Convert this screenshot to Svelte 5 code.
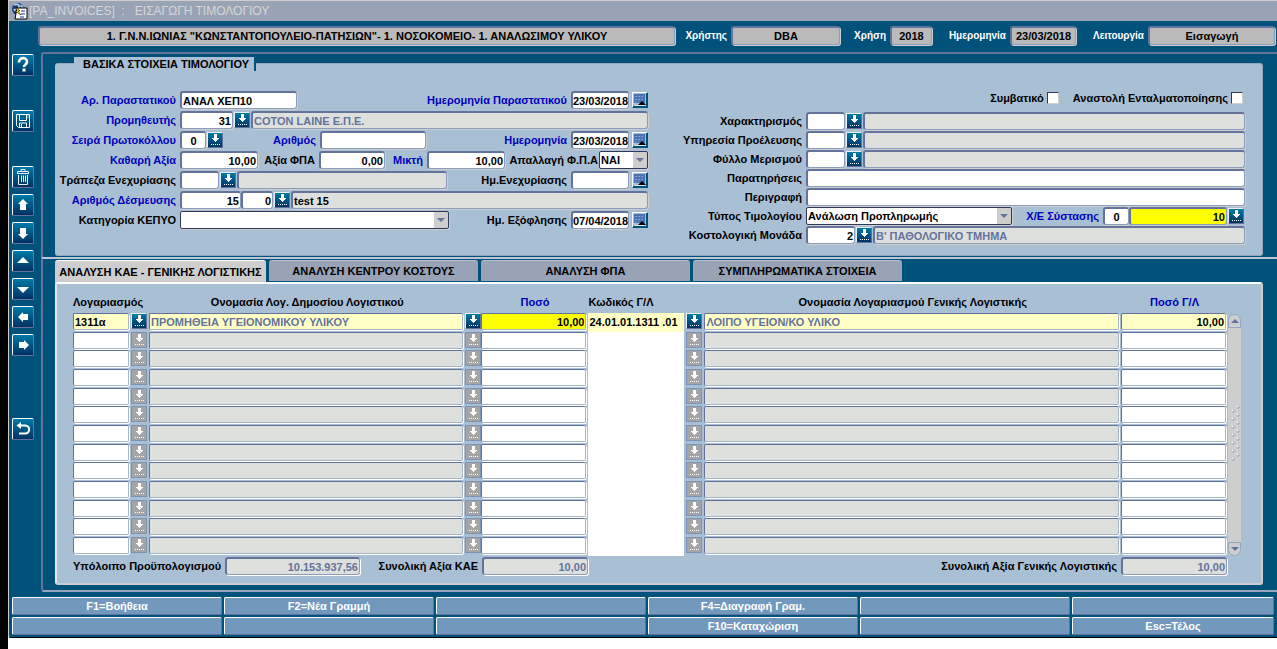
<script lang="ts">
    type Tool = 'help' | 'save' | 'trash' | 'up' | 'down' | 'first' | 'last' | 'left' | 'right' | 'back';

    interface Line {
        account: string;
        name: string;
        amount: string;
        code: string;
        glName: string;
        glAmount: string;
    }

    const tools: { icon: Tool, title: string }[] = [
        { icon: 'help', title: 'Βοήθεια' },
        { icon: 'save', title: 'Καταχώριση' },
        { icon: 'trash', title: 'Διαγραφή' },
        { icon: 'up', title: 'Προηγούμενη γραμμή' },
        { icon: 'down', title: 'Επόμενη γραμμή' },
        { icon: 'first', title: 'Προηγούμενη σελίδα' },
        { icon: 'last', title: 'Επόμενη σελίδα' },
        { icon: 'left', title: 'Προηγούμενο πεδίο' },
        { icon: 'right', title: 'Επόμενο πεδίο' },
        { icon: 'back', title: 'Επιστροφή' },
    ];

    const tabs = [
        'ΑΝΑΛΥΣΗ ΚΑΕ - ΓΕΝΙΚΗΣ ΛΟΓΙΣΤΙΚΗΣ',
        'ΑΝΑΛΥΣΗ ΚΕΝΤΡΟΥ ΚΟΣΤΟΥΣ',
        'ΑΝΑΛΥΣΗ ΦΠΑ',
        'ΣΥΜΠΛΗΡΩΜΑΤΙΚΑ ΣΤΟΙΧΕΙΑ',
    ];

    const keys = [
        'F1=Βοήθεια', 'F2=Νέα Γραμμή', '', 'F4=Διαγραφή Γραμ.', '', '',
        '', '', '', 'F10=Καταχώριση', '', 'Esc=Τέλος',
    ];

    const empty: Line = { account: '', name: '', amount: '', code: '', glName: '', glAmount: '' };

    let lines: Line[] = $state([
        {
            account: '1311α',
            name: 'ΠΡΟΜΗΘΕΙΑ ΥΓΕΙΟΝΟΜΙΚΟΥ ΥΛΙΚΟΥ',
            amount: '10,00',
            code: '24.01.01.1311 .01',
            glName: 'ΛΟΙΠΟ ΥΓΕΙΟΝ/ΚΟ ΥΛΙΚΟ',
            glAmount: '10,00',
        },
        ...Array.from({ length: 12 }, () => ({ ...empty })),
    ]);

    let activeTab = $state(0);
    let activeLine = $state(0);
</script>

{#snippet lov(disabled = false)}
    <button class="lov" class:disabled type="button" aria-label="Λίστα τιμών" {disabled}>
        <svg viewBox="0 0 14 14" shape-rendering="crispEdges">
            <path d="M6 1h3v4h2v1h-1v1H9v1H8v1H7V8H6V7H5V6H4V5h2z" fill="#fff" />
            <path d="M3 11.5h10" stroke="#fff" stroke-dasharray="1 1" />
        </svg>
    </button>
{/snippet}

{#snippet calendar()}
    <button class="calendar" type="button" aria-label="Ημερολόγιο">
        <svg viewBox="0 0 14 14">
            <rect x="1" y="1" width="11" height="9" fill="#4a73b5" />
            <path d="M2 3.500h9M2 6.500h9M2 9h4" stroke="#7b9cd0" stroke-dasharray="2 1" />
            <path d="M5 12l4-4 4 4z" fill="#000" />
            <path d="M2 12.500h11" stroke="#dde7ee" />
        </svg>
    </button>
{/snippet}

{#snippet toolIcon(icon: Tool)}
    <svg viewBox="0 0 20 20" fill="#fff">
        {#if icon === 'help'}
            <path d="M6 7.500C6 1.500 14.500 2 14 7c-.2 2.500-3 2.500-3 5" fill="none" stroke="#fff" stroke-width="2.600" />
            <rect x="9.500" y="13.500" width="3" height="3" />
        {:else if icon === 'save'}
            <path d="M3.500 3.500h13v13h-11l-2-2zM6.500 4v5.500h7V4M6.500 16.500v-4.500h7v4.500M8.500 13v3" fill="none" stroke="#fff" />
            <path d="M14.500 4h1M14.500 6h1" stroke="#fff" />
        {:else if icon === 'trash'}
            <path d="M8 4V2.500h4V4M4.500 6V4.500h11V6M4 6.500h12M5.500 8v9.500h9V8M8.500 8.500V15M10.500 8.500V15M12.500 8.500V15" fill="none" stroke="#e7eff7" />
        {:else if icon === 'up'}
            <path d="M10 4l5 5h-2v6H7V9H5z" />
        {:else if icon === 'down'}
            <path d="M10 16l5-5h-2V5H7v6H5z" />
        {:else if icon === 'first'}
            <path d="M10 6l6 6H4z" />
        {:else if icon === 'last'}
            <path d="M10 14l6-6H4z" />
        {:else if icon === 'left'}
            <path d="M5 10l5-5v2h5v6h-5v2z" />
        {:else if icon === 'right'}
            <path d="M16 10l-5-5v2H6v6h5v2z" />
        {:else}
            <path d="M6 6.500h6c5.500 0 5.500 8 0 8H6" fill="none" stroke="#fff" stroke-width="2" />
            <path d="M3.500 6.500L8 3v7z" />
        {/if}
    </svg>
{/snippet}

<div class="page">
    <div class="window">
        <header class="titlebar">
            <svg class="logo" viewBox="0 0 18 18">
                <circle cx="7" cy="7" r="6" fill="#21397b" />
                <path d="M3 3c3-2 6 0 5 3S4 9 3 7M10 3l2 4" stroke="#a5cede" stroke-width="2" fill="none" />
                <path d="M6 6h10v11H4z" fill="#fff" stroke="#000" />
                <path d="M10 9h4M10 12h4M9 15h4" stroke="#2131b5" />
                <path d="M5 5l4 4H7l3 4-6-4h2z" fill="#ffe600" stroke="#000" stroke-width=".5" />
            </svg>
            <h1>[PA_INVOICES]&nbsp; :&nbsp;&nbsp; ΕΙΣΑΓΩΓΗ ΤΙΜΟΛΟΓΙΟΥ</h1>
        </header>

        <div class="status">
            <input class="grow" aria-label="Φορέας" readonly value={'1. Γ.Ν.Ν.ΙΩΝΙΑΣ "ΚΩΝΣΤΑΝΤΟΠΟΥΛΕΙΟ-ΠΑΤΗΣΙΩΝ"- 1. ΝΟΣΟΚΟΜΕΙΟ- 1. ΑΝΑΛΩΣΙΜΟΥ ΥΛΙΚΟΥ'} />
            <label class="l56" for="user">Χρήστης</label>
            <input class="w109" id="user" readonly value="DBA" />
            <label class="l50" for="year">Χρήση</label>
            <input class="w42" id="year" readonly value="2018" />
            <label class="l78" for="today">Ημερομηνία</label>
            <input class="w66" id="today" readonly value="23/03/2018" />
            <label class="l72" for="mode">Λειτουργία</label>
            <input class="w127" id="mode" readonly value="Εισαγωγή" />
        </div>

        <div class="body">
            <nav class="toolbar">
                {#each tools as { icon, title }}
                    <button class={['tool', icon]} type="button" aria-label={title}>
                        {@render toolIcon(icon)}
                    </button>
                {/each}
            </nav>

            <main>
                <div class="frame upper">
                    <section class="panel basic">
                        <h2>ΒΑΣΙΚΑ ΣΤΟΙΧΕΙΑ ΤΙΜΟΛΟΓΙΟΥ</h2>
                        <form class="columns">
                            <div class="column">
                                <div class="row">
                                    <label class="main key" for="docNo">Αρ. Παραστατικού</label>
                                    <input class="w117" id="docNo" value="ΑΝΑΛ ΧΕΠ10" />
                                    <label class="push key" for="docDate">Ημερομηνία Παραστατικού</label>
                                    <input class="date" id="docDate" value="23/03/2018" />
                                    {@render calendar()}
                                </div>
                                <div class="row">
                                    <label class="main key" for="supplier">Προμηθευτής</label>
                                    <input class="w53 num" id="supplier" value="31" />
                                    {@render lov()}
                                    <input class="grow view" aria-label="Επωνυμία προμηθευτή" readonly value="COTON LAINE Ε.Π.Ε." />
                                </div>
                                <div class="row">
                                    <label class="main key" for="series">Σειρά Πρωτοκόλλου</label>
                                    <input class="w26 mid" id="series" value="0" />
                                    {@render lov()}
                                    <label class="l96 key" for="protocol">Αριθμός</label>
                                    <input class="w106" id="protocol" value="" />
                                    <label class="push key" for="protocolDate">Ημερομηνία</label>
                                    <input class="date" id="protocolDate" value="23/03/2018" />
                                    {@render calendar()}
                                </div>
                                <div class="row">
                                    <label class="main key" for="net">Καθαρή Αξία</label>
                                    <input class="w78 num" id="net" value="10,00" />
                                    <label class="l61" for="vat">Αξία ΦΠΑ</label>
                                    <input class="w66 num" id="vat" value="0,00" />
                                    <label class="l42 key" for="gross">Μικτή</label>
                                    <input class="w78 num" id="gross" value="10,00" />
                                    <label class="push tight" for="exempt">Απαλλαγή Φ.Π.Α</label>
                                    <span class="select w49">
                                        <select id="exempt"><option>ΝΑΙ</option><option>ΟΧΙ</option></select>
                                    </span>
                                </div>
                                <div class="row">
                                    <label class="main" for="bank">Τράπεζα Ενεχυρίασης</label>
                                    <input class="w39" id="bank" value="" />
                                    {@render lov()}
                                    <input class="w210 view" aria-label="Όνομα τράπεζας" readonly value="" />
                                    <label class="push" for="pledgeDate">Ημ.Ενεχυρίασης</label>
                                    <input class="date" id="pledgeDate" value="" />
                                    {@render calendar()}
                                </div>
                                <div class="row">
                                    <label class="main key" for="commitment">Αριθμός Δέσμευσης</label>
                                    <input class="w61 num" id="commitment" value="15" />
                                    <input class="w32 num" aria-label="Α/Α δέσμευσης" value="0" />
                                    {@render lov()}
                                    <input class="grow view dark" aria-label="Περιγραφή δέσμευσης" readonly value="test 15" />
                                </div>
                                <div class="row">
                                    <label class="main" for="kepyo">Κατηγορία ΚΕΠΥΟ</label>
                                    <span class="select w269">
                                        <select id="kepyo"><option></option></select>
                                    </span>
                                    <label class="push" for="payDate">Ημ. Εξόφλησης</label>
                                    <input class="date" id="payDate" value="07/04/2018" />
                                    {@render calendar()}
                                </div>
                            </div>

                            <div class="column second">
                                <div class="checks">
                                    <label>Συμβατικό <input type="checkbox" /></label>
                                    <label>Αναστολή Ενταλματοποίησης <input type="checkbox" /></label>
                                </div>
                                <div class="row">
                                    <label class="main" for="kind">Χαρακτηρισμός</label>
                                    <input class="w39" id="kind" value="" />
                                    {@render lov()}
                                    <input class="grow view" aria-label="Περιγραφή χαρακτηρισμού" readonly value="" />
                                </div>
                                <div class="row">
                                    <label class="main" for="origin">Υπηρεσία Προέλευσης</label>
                                    <input class="w39" id="origin" value="" />
                                    {@render lov()}
                                    <input class="grow view" aria-label="Όνομα υπηρεσίας" readonly value="" />
                                </div>
                                <div class="row">
                                    <label class="main" for="sheet">Φύλλο Μερισμού</label>
                                    <input class="w39" id="sheet" value="" />
                                    {@render lov()}
                                    <input class="grow view" aria-label="Περιγραφή φύλλου" readonly value="" />
                                </div>
                                <div class="row">
                                    <label class="main" for="notes">Παρατηρήσεις</label>
                                    <input class="grow" id="notes" value="" />
                                </div>
                                <div class="row">
                                    <label class="main" for="description">Περιγραφή</label>
                                    <input class="grow" id="description" value="" />
                                </div>
                                <div class="row">
                                    <label class="main" for="type">Τύπος Τιμολογίου</label>
                                    <span class="select w206">
                                        <select id="type"><option>Ανάλωση Προπληρωμής</option></select>
                                    </span>
                                    <label class="push key" for="order">Χ/Ε Σύστασης</label>
                                    <input class="w26 mid" id="order" value="0" />
                                    <input class="w98 num required" aria-label="Αριθμός Χ/Ε" value="10" />
                                    {@render lov()}
                                </div>
                                <div class="row">
                                    <label class="main" for="unit">Κοστολογική Μονάδα</label>
                                    <input class="w49 num" id="unit" value="2" />
                                    {@render lov()}
                                    <input class="grow view" aria-label="Όνομα μονάδας" readonly value="Β' ΠΑΘΟΛΟΓΙΚΟ ΤΜΗΜΑ" />
                                </div>
                            </div>
                        </form>
                    </section>
                </div>

                <div class="frame lower">
                    <div class="tabs" role="tablist">
                        {#each tabs as tab, i}
                            <button
                                type="button"
                                role="tab"
                                class:active={i === activeTab}
                                aria-selected={i === activeTab}
                                onclick={() => (activeTab = i)}
                            >{tab}</button>
                        {/each}
                    </div>

                    <section class="panel analysis">
                        <div class="grid">
                            <table>
                                <colgroup>
                                    <col class="c-account" />
                                    <col class="c-lov" />
                                    <col class="c-name" />
                                    <col class="c-lov2" />
                                    <col class="c-amount" />
                                    <col class="c-code" />
                                    <col class="c-lov" />
                                    <col />
                                    <col class="c-amount" />
                                </colgroup>
                                <thead>
                                    <tr>
                                        <th class="start" colspan="2">Λογαριασμός</th>
                                        <th>Ονομασία Λογ. Δημοσίου Λογιστικού</th>
                                        <th></th>
                                        <th class="key">Ποσό</th>
                                        <th class="start">Κωδικός Γ/Λ</th>
                                        <th></th>
                                        <th>Ονομασία Λογαριασμού Γενικής Λογιστικής</th>
                                        <th class="key">Ποσό Γ/Λ</th>
                                    </tr>
                                </thead>
                                <tbody>
                                    {#each lines as line, i}
                                        <tr class:current={i === activeLine} onfocusin={() => (activeLine = i)}>
                                            <td><input aria-label="Λογαριασμός" bind:value={line.account} /></td>
                                            <td>{@render lov(i !== activeLine)}</td>
                                            <td><input class="view" aria-label="Ονομασία" readonly value={line.name} /></td>
                                            <td>{@render lov(i !== activeLine)}</td>
                                            <td><input class="num amount" aria-label="Ποσό" bind:value={line.amount} /></td>
                                            <td><input class="code" aria-label="Κωδικός Γ/Λ" bind:value={line.code} /></td>
                                            <td>{@render lov(i !== activeLine)}</td>
                                            <td><input class="view" aria-label="Ονομασία Γ/Λ" readonly value={line.glName} /></td>
                                            <td><input class="num" aria-label="Ποσό Γ/Λ" bind:value={line.glAmount} /></td>
                                        </tr>
                                    {/each}
                                </tbody>
                            </table>

                            <div class="scroll">
                                <button class="top" type="button" aria-label="Πάνω">
                                    <svg viewBox="0 0 8 4"><path d="M4 0l4 4H0z" fill="#63739c" /></svg>
                                </button>
                                <svg class="grip" viewBox="0 0 12 60">
                                    {#each Array(7) as _, i}
                                        <circle cx="4" cy={6 + i * 8} r="1.500" fill="#8c9cb5" />
                                        <circle cx="3.500" cy={5.5 + i * 8} r="1" fill="#fff" />
                                        <circle cx="9" cy={2 + i * 8} r="1.500" fill="#8c9cb5" />
                                        <circle cx="8.500" cy={1.5 + i * 8} r="1" fill="#fff" />
                                    {/each}
                                </svg>
                                <button class="bottom" type="button" aria-label="Κάτω">
                                    <svg viewBox="0 0 8 4"><path d="M0 0h8L4 4z" fill="#63739c" /></svg>
                                </button>
                            </div>
                        </div>

                        <div class="totals">
                            <label class="l152" for="balance">Υπόλοιπο Προϋπολογισμού</label>
                            <input class="w135 num view" id="balance" readonly value="10.153.937,56" />
                            <label class="l122" for="totalKae">Συνολική Αξία ΚΑΕ</label>
                            <input class="w106 num view" id="totalKae" readonly value="10,00" />
                            <label class="push" for="totalGl">Συνολική Αξία Γενικής Λογιστικής</label>
                            <input class="w106 num view" id="totalGl" readonly value="10,00" />
                        </div>
                    </section>
                </div>
            </main>
        </div>

        <footer>
            {#each keys as key}
                <button type="button">{key}</button>
            {/each}
        </footer>
    </div>
</div>

<style>
    :global(body) {
        background: #fff;
    }

    .page {
        min-height: 100vh;
        box-sizing: border-box;
        border-left: 8px solid #000;
        font: bold 11px/14px 'Liberation Sans', Arial, sans-serif;
        color: #000;
    }

    .page *, .page *::after {
        box-sizing: border-box;
    }

    .window {
        background: #00527b;
        border-left: 1px solid #cecece;
        border-bottom: 1px solid #000;
        border-bottom-left-radius: 3px;
    }

    button {
        font: inherit;
        padding: 0;
        margin: 0;
        cursor: pointer;
    }

    svg {
        display: block;
    }

    .titlebar {
        display: flex;
        align-items: center;
        height: 21px;
        padding-left: 2px;
        background: #98a4b6;
        border-top: 1px solid #cecece;
    }

    .logo {
        width: 18px;
        height: 18px;
    }

    h1 {
        margin: 0;
        font-size: 12px;
        line-height: 20px;
        font-weight: normal;
        color: #d6d6d6;
        white-space: nowrap;
    }

    input, select {
        min-width: 0;
        height: 18px;
        margin: 0;
        padding: 0 1px;
        font: inherit;
        color: #000;
        background: #fff;
        border: 1px solid #8c9cbd;
        border-top: 2px solid #63739c;
        border-left: 2px solid #63739c;
        border-radius: 3px;
        box-shadow: 1px 1px 0 #cecece;
        outline: none;
    }

    .view {
        color: #63739c;
        background: #dee0de;
    }

    .dark {
        color: #000;
    }

    .num {
        text-align: right;
    }

    .mid {
        text-align: center;
    }

    .required {
        background: #ff0;
    }

    .grow {
        flex: 1;
    }

    .status {
        display: flex;
        align-items: center;
        padding: 5px 2px 7px 29px;
    }

    .status input {
        height: 19px;
        background: #bababa;
        text-align: center;
    }

    .status label {
        padding-right: 4px;
        font-size: 10px;
        color: #fff;
        text-align: right;
    }

    .body {
        display: flex;
    }

    .toolbar {
        display: flex;
        flex-direction: column;
        gap: 6px;
        width: 32px;
        padding: 2px 0 0 3px;
    }

    .tool {
        width: 22px;
        height: 22px;
        border: 1px solid #63739c;
        border-top-color: #fff;
        border-left-color: #fff;
        border-radius: 2px;
        background: linear-gradient(#007ba5, #003163);
    }

    .tool.save, .tool.trash {
        margin-top: 28px;
    }

    .tool.back {
        margin-top: 56px;
    }

    main {
        flex: 1;
        min-width: 0;
    }

    .frame {
        padding: 0 14px 0 12px;
        border-left: 2px solid #63739c;
    }

    .upper {
        padding-top: 9px;
        padding-bottom: 1px;
        border-top: 2px solid #63739c;
        border-top-left-radius: 3px;
    }

    .lower {
        padding-bottom: 5px;
        border-top: 2px solid #bdc6d6;
        border-bottom: 2px solid #94a5bd;
        border-bottom-left-radius: 3px;
    }

    .panel {
        background: #a9bfd4;
    }

    .basic {
        padding: 0 17px 11px 4px;
        border: 1px solid #94a5bd;
        border-left: 0;
        border-radius: 3px;
    }

    h2 {
        width: max-content;
        height: 14px;
        margin: -7px 0 0 15px;
        padding: 0 5px 0 9px;
        font-size: 11px;
        line-height: 14px;
        background: #a9bfd4;
        border-right: 2px solid #00527b;
    }

    .columns {
        display: grid;
        grid-template-columns: 1fr 1fr;
        column-gap: 8px;
        padding-top: 20px;
    }

    .column {
        display: flex;
        flex-direction: column;
        gap: 2px;
        min-width: 0;
    }

    .second {
        gap: 1px;
    }

    .row {
        display: flex;
        align-items: center;
        height: 18px;
    }

    label {
        flex: none;
        white-space: nowrap;
        text-align: right;
    }

    .row label {
        padding-right: 4px;
    }

    .row .main {
        width: 121px;
    }

    .second .main {
        width: 150px;
    }

    .row .tight {
        padding-right: 1px;
    }

    .push {
        margin-left: auto;
    }

    .key {
        color: #0000bd;
    }

    .l42 { width: 42px; }
    .l50 { width: 50px; }
    .l56 { width: 56px; }
    .l61 { width: 61px; }
    .l72 { width: 72px; }
    .l78 { width: 78px; }
    .l96 { width: 96px; }
    .l122 { width: 122px; }
    .l152 { width: 152px; }

    .w26 { width: 26px; }
    .w32 { width: 32px; }
    .w39 { width: 39px; }
    .w42 { width: 42px; }
    .w49 { width: 49px; }
    .w53 { width: 53px; }
    .w61 { width: 61px; }
    .w66 { width: 66px; }
    .w78 { width: 78px; }
    .w98 { width: 98px; }
    .w106 { width: 106px; }
    .w109 { width: 109px; }
    .w117 { width: 117px; }
    .w127 { width: 127px; }
    .w135 { width: 135px; }
    .w206 { width: 206px; }
    .w210 { width: 210px; }
    .w269 { width: 269px; }

    .date {
        width: 58px;
        padding: 0;
        text-align: center;
    }

    .select {
        position: relative;
        display: flex;
    }

    .select::after {
        content: '';
        position: absolute;
        top: 7px;
        right: 4px;
        border: 4px solid transparent;
        border-top-color: #63739c;
        border-bottom: 0;
        pointer-events: none;
    }

    select {
        width: 100%;
        appearance: none;
        background: linear-gradient(#cecece, #cecece) right / 14px 100% no-repeat #fff;
        border: 1px solid #31395a;
        border-radius: 2px;
    }

    .lov, .calendar {
        flex: none;
        width: 16px;
        height: 16px;
        margin: 0 1px;
        border: 1px solid #63739c;
        border-top-color: #e7eff7;
        border-left-color: #e7eff7;
        background: linear-gradient(#007ba5, #003163);
    }

    .lov svg, .calendar svg {
        width: 14px;
        height: 14px;
    }

    .calendar {
        margin: 0 0 0 3px;
        border-color: #fff #00527b #00527b #fff;
        box-shadow: inset -1px -1px 0 #00527b;
        background: #a9bfd4;
    }

    .lov.disabled {
        background: #a5a5a5;
        border-color: #7b94b5;
    }

    .checks {
        display: flex;
        justify-content: flex-end;
        gap: 14px;
        height: 14px;
        margin-bottom: 6px;
        padding-right: 2px;
    }

    .checks label {
        display: flex;
        align-items: center;
        gap: 3px;
    }

    .checks input {
        appearance: none;
        width: 12px;
        height: 12px;
        border: 1px solid #cecece;
        border-top-color: #31395a;
        border-left-color: #31395a;
        border-radius: 0;
        box-shadow: none;
    }

    .tabs {
        display: grid;
        grid-template-columns: 211px repeat(3, 209px);
        column-gap: 3px;
        height: 23px;
        padding-top: 1px;
    }

    .tabs button {
        height: 21px;
        color: #000;
        background: #98a4b6;
        border: 0;
        border-top: 1px solid #b5bdce;
        border-radius: 3px 3px 0 0;
        white-space: nowrap;
    }

    .tabs .active {
        height: 22px;
        background: #cecece;
        border-top-color: #fff;
    }

    .analysis {
        padding: 7px 20px 8px 16px;
        border: 2px solid #cecece;
        border-top-color: #fff;
        border-left-color: #e7e7e7;
        border-radius: 0 3px 3px 3px;
    }

    .grid {
        display: flex;
    }

    table {
        flex: 1;
        width: 0;
        table-layout: fixed;
        border-collapse: collapse;
    }

    .c-account { width: 58px; }
    .c-lov { width: 18px; }
    .c-lov2 { width: 16px; }
    .c-name { width: 27.4%; }
    .c-amount { width: 107px; }
    .c-code { width: 98px; }

    th {
        height: 22px;
        padding: 0;
        font-weight: bold;
        white-space: nowrap;
    }

    .start {
        text-align: left;
    }

    td {
        height: 19px;
        padding: 0 2px 1px 0;
        vertical-align: top;
    }

    /* rows run 19, 18, 19 so that thirteen of them fill the block */
    tbody tr:nth-child(3n + 2) td {
        height: 18px;
    }

    td input {
        display: block;
        width: 100%;
        height: 17px;
        border-width: 1px;
        border-right-color: #a5b5c6;
        border-bottom-color: #a5b5c6;
        border-radius: 2px;
        box-shadow: 1px 1px 0 #fff;
    }

    td:has(.lov) {
        padding: 0;
    }

    td .lov {
        display: block;
        margin: 0;
    }

    td:has(.code) {
        padding: 0 2px 0 0;
    }

    td .code {
        height: 19px;
        padding-bottom: 2px;
        border: 0;
        border-radius: 0;
        box-shadow: none;
    }

    tr:nth-child(3n + 2) .code {
        height: 18px;
    }

    .current input {
        background: #ffffc6;
    }

    .current .amount {
        background: #ff0;
    }

    .scroll {
        display: flex;
        flex-direction: column;
        align-items: center;
        justify-content: space-between;
        width: 13px;
        margin-top: 23px;
        background: #cecece;
        border-radius: 7px;
    }

    .scroll button {
        display: flex;
        align-items: center;
        justify-content: center;
        width: 13px;
        height: 14px;
        background: #cecece;
        border: 1px solid #94a5bd;
    }

    .scroll .top {
        border-radius: 7px 7px 0 0;
    }

    .scroll .bottom {
        border-radius: 0 0 7px 7px;
    }

    .scroll button svg {
        width: 8px;
        height: 4px;
    }

    .grip {
        width: 12px;
        height: 60px;
    }

    .totals {
        display: flex;
        align-items: center;
        padding: 1px 14px 0 0;
    }

    .totals input {
        box-shadow: 1px 1px 0 #fff;
    }

    .totals label {
        padding-right: 4px;
    }

    footer {
        display: grid;
        grid-template-columns: repeat(5, 210fr) 202fr;
        gap: 2px;
        padding: 5px 3px 2px;
    }

    footer button {
        height: 18px;
        color: #fff;
        background: #7398bd;
        border: 1px solid #63739c;
        border-top-color: #fff;
        border-left-color: #fff;
        border-radius: 2px;
    }
</style>
